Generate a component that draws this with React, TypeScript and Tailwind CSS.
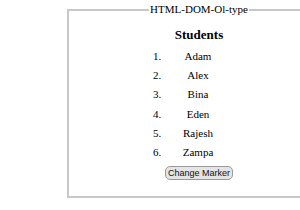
import React from "react";

const students = ["Adam", "Alex", "Bina", "Eden", "Rajesh", "Zampa"];

export default function App() {
  return (
    <div className="w-[300px] h-[210px] bg-white overflow-hidden font-['Liberation_Serif',serif] text-black">
      <fieldset className="ml-[67px] mt-[3px] w-[264px] h-[195px] border-2 border-[#c8c8c8] p-0 m-0 flex flex-col items-center">
        <legend className="mx-auto px-[1px] text-[11px] leading-[13px]">HTML-DOM-Ol-type</legend>
        <div className="w-full flex flex-col items-center">
          <h3 className="mt-[11px] text-[13px] leading-[15px] font-bold">Students</h3>
          <ol className="mt-[5px] w-[92px] flex flex-col">
            {students.map((s, i) => (
              <li key={s} className="grid grid-cols-[20px_50px_22px] h-[19.2px] items-center text-[11px] leading-[13px]">
                <span>{i + 1}.</span>
                <span className="text-center">{s}</span>
                <span />
              </li>
            ))}
          </ol>
          <button className="mt-[4px] h-[14px] px-[2px] rounded-[5px] border border-[#9a9a9a] bg-[#e4e4e4] font-['Liberation_Sans',sans-serif] text-[9px] leading-[12px] text-[#111]">
            Change Marker
          </button>
        </div>
      </fieldset>
    </div>
  );
}
